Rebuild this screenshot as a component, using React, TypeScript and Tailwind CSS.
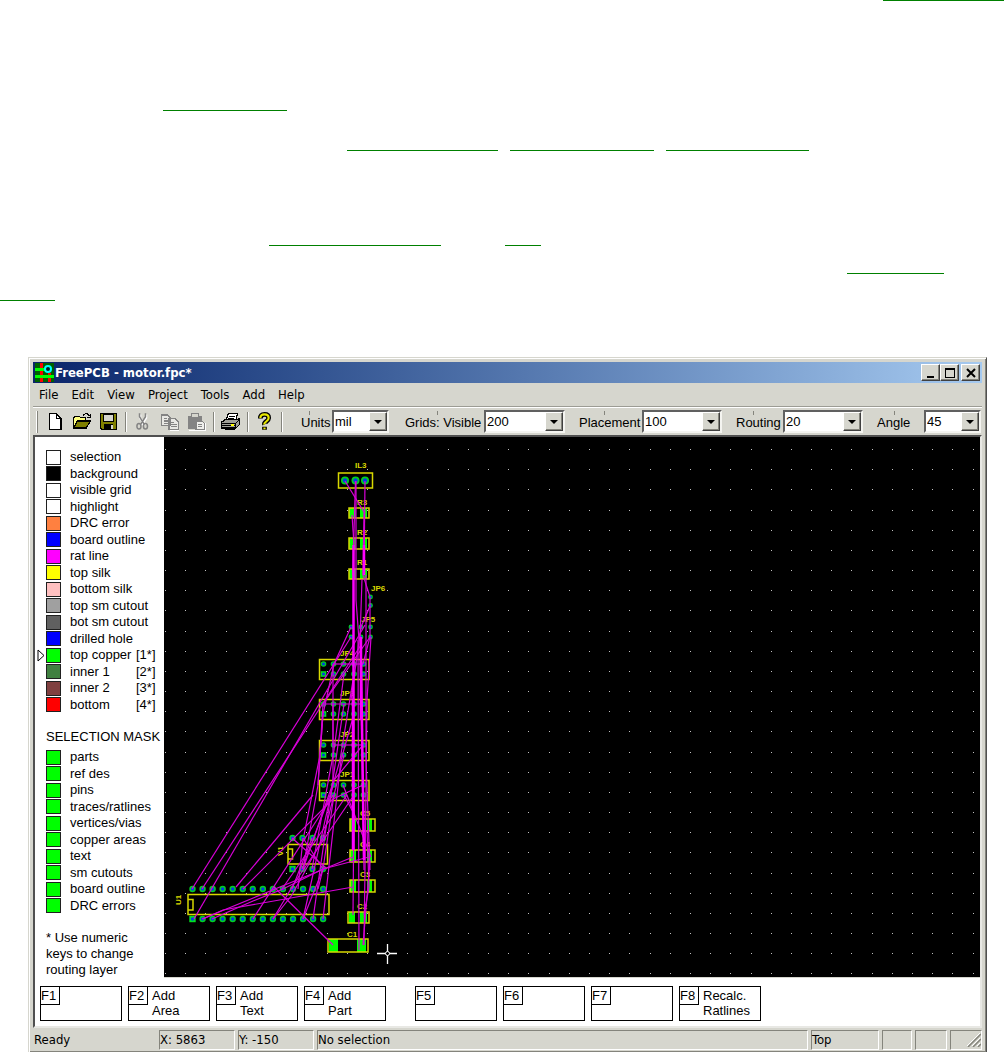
import type { ReactNode } from 'react'

const layers = [
  { name: 'selection', color: 'bg-white' },
  { name: 'background', color: 'bg-black' },
  { name: 'visible grid', color: 'bg-white' },
  { name: 'highlight', color: 'bg-white' },
  { name: 'DRC error', color: 'bg-[#ff8040]' },
  { name: 'board outline', color: 'bg-[#0000ff]' },
  { name: 'rat line', color: 'bg-[#ff00ff]' },
  { name: 'top silk', color: 'bg-[#ffff00]' },
  { name: 'bottom silk', color: 'bg-[#ffc0c0]' },
  { name: 'top sm cutout', color: 'bg-[#a0a0a0]' },
  { name: 'bot sm cutout', color: 'bg-[#606060]' },
  { name: 'drilled hole', color: 'bg-[#0000ff]' },
  { name: 'top copper', color: 'bg-[#00ff00]', tag: '[1*]', active: true },
  { name: 'inner 1', color: 'bg-[#408040]', tag: '[2*]' },
  { name: 'inner 2', color: 'bg-[#804040]', tag: '[3*]' },
  { name: 'bottom', color: 'bg-[#ff0000]', tag: '[4*]' },
]

const masks = [
  'parts',
  'ref des',
  'pins',
  'traces/ratlines',
  'vertices/vias',
  'copper areas',
  'text',
  'sm cutouts',
  'board outline',
  'DRC errors',
]

const menus = ['File', 'Edit', 'View', 'Project', 'Tools', 'Add', 'Help']

const combos = [
  { label: 'Units', value: 'mil', labelClass: 'w-[47px] pl-4', boxClass: 'w-[57px]' },
  { label: 'Grids: Visible', value: '200', labelClass: 'w-[95px] pl-4', boxClass: 'w-[81px]' },
  { label: 'Placement', value: '100', labelClass: 'w-[77px] pl-[14px]', boxClass: 'w-[80px]' },
  { label: 'Routing', value: '20', labelClass: 'w-[61px] pl-[14px]', boxClass: 'w-[80px]' },
  { label: 'Angle', value: '45', labelClass: 'w-[61px] pl-[14px]', boxClass: 'w-[57px]' },
]

const functionKeys = [
  [
    { id: 'F1', lines: [] },
    { id: 'F2', lines: ['Add', 'Area'] },
    { id: 'F3', lines: ['Add', 'Text'] },
    { id: 'F4', lines: ['Add', 'Part'] },
  ],
  [
    { id: 'F5', lines: [] },
    { id: 'F6', lines: [] },
    { id: 'F7', lines: [] },
    { id: 'F8', lines: ['Recalc.', 'Ratlines'] },
  ],
]

// Two-pad parts: outline plus left and right copper pads
const chips = [
  { ref: 'R3', x: 349, y: 508, w: 20, h: 10, pads: [[349, 7], [360, 7]], tx: 357, ty: 505 },
  { ref: 'R2', x: 349, y: 538, w: 20, h: 11, pads: [[349, 7], [360, 7]], tx: 357, ty: 535 },
  { ref: 'R1', x: 349, y: 569, w: 20, h: 10, pads: [[349, 7], [360, 7]], tx: 357, ty: 565 },
  { ref: 'C5', x: 350, y: 819, w: 25, h: 12, pads: [[350, 6], [367, 5]], tx: 360, ty: 816 },
  { ref: 'C4', x: 350, y: 850, w: 25, h: 12, pads: [[350, 6], [367, 5]], tx: 360, ty: 847 },
  { ref: 'C3', x: 350, y: 880, w: 25, h: 12, pads: [[350, 6], [367, 5]], tx: 360, ty: 877 },
  { ref: 'C2', x: 348, y: 912, w: 21, h: 11, pads: [[349, 6], [360, 7]], tx: 357, ty: 909 },
  { ref: 'C1', x: 328, y: 939, w: 40, h: 13, pads: [[329, 9], [357, 9]], tx: 347, ty: 937 },
]

const headers = [
  { ref: 'JP4', y: 659 },
  { ref: 'JP3', y: 699 },
  { ref: 'JP2', y: 740 },
  { ref: 'JP1', y: 780 },
]
const headerPins = [323.5, 333.5, 343.5, 354, 363.5]

const vias = [
  [370.5, 597], [370.5, 605.5],
  [351, 627], [361, 627], [370.5, 627],
  [351, 637], [361, 637], [370.5, 637],
]

const dipPins = Array.from({ length: 14 }, (_, i) => 192.5 + i * 10.05)

const ratlines = [
  'M345 481L364 512', 'M355.5 481L354 530L353 575', 'M365 481L364 575',
  'M352 515L354 545', 'M356 481L356 600L359 640', 'M364 512L363 575L370 597',
  'M370 597L370 637L363 664', 'M370 606L361 627L351 700',
  'M351 637L192 889', 'M361 645L202 889', 'M365 625L194 919',
  'M370 637L344 674L323 704L318 785', 'M333 664L333 745',
  'M351 627L334 664L323 714L320 755L304 835', 'M333 664H363', 'M323 704H363',
  'M333 745H363', 'M362 579L360 640L364 870', 'M366 575V760L370 870',
  'M358 640L359 950', 'M371 637L367 700L366 790L364 945', 'M323 714L318 785L303 869',
  'M333 704L333 785L303 919', 'M344 674L334 750L312 869', 'M354 674L340 760L330 795L302 869',
  'M344 704L330 800L313 919', 'M354 714L341 760L323 919', 'M344 755L334 795L323 838',
  'M334 795L323 869L318 889', 'M363 785L333 799L243 889', 'M313 795L236 887',
  'M354 795L295 882L273 919', 'M333 795L253 919',
  'M343 785L371 857', 'M363 745L334 780L303 869', 'M344 795L354 814',
  'M292 838L327 869', 'M303 838L323 869', 'M323 838L292 895L273 919',
  'M312 838L292 889', 'M353 857L319 871L202 919', 'M369 857L323 869L283 889L253 901L212 919',
  'M353 887L223 910L203 919', 'M333 945L274 887', 'M354 797L353 915',
  'M367 830L369 887L364 915', 'M370 860L363 945', 'M347 795L282 889',
  'M303 838L298 889', 'M323 869L303 919',
]

const boldRatlines = [
  'M353.5 545V850', 'M361 637V720', 'M353 700V850', 'M364 545V575', 'M361 660L364 860',
]

// Visible grid, wide enough for large windows
const gridDots = Array.from({ length: 27 }, (_, row) =>
  Array.from(
    { length: 120 },
    (_, col) => `M${Math.round(1 + col * 20.19)} ${Math.round(12 + row * 20.17)}h1v1h-1z`,
  ).join(''),
).join('')

function ToolIcon({ children }: { children: ReactNode }) {
  return (
    <svg viewBox="0 0 16 16" className="size-[19px]" shapeRendering="crispEdges">
      {children}
    </svg>
  )
}

const tools = [
  [
    {
      name: 'New',
      icon: (
        <ToolIcon>
          <path d="M3 1h7l4 4v10H3z" />
          <path d="M4 2h5v4h4v8H4zM10 3l2 2h-2z" fill="#fff" />
        </ToolIcon>
      ),
    },
    {
      name: 'Open',
      icon: (
        <ToolIcon>
          <path d="M1 13V4.500h1l1-1h3l1 1h4.500V7" fill="#ffff80" stroke="#000" />
          <path d="M1.500 13.500l3-6h11l-3.500 6z" fill="#808000" stroke="#000" />
          <path d="M9 2.500h1l1-1h2l2 2M15.500 1.500v3h-3" fill="none" stroke="#000" />
        </ToolIcon>
      ),
    },
    {
      name: 'Save',
      icon: (
        <ToolIcon>
          <path d="M1.500 1.500h13v13h-12l-1-1z" fill="#808000" stroke="#000" />
          <path d="M4 2h8v6H4z" fill="#d6d6ce" stroke="#000" />
          <path d="M4 10h8v4H4z" fill="#000" />
          <path d="M10 11h1.500v3H10z" fill="#d6d6ce" />
        </ToolIcon>
      ),
    },
  ],
  [
    {
      name: 'Cut',
      icon: (
        <ToolIcon>
          <g fill="none" shapeRendering="auto">
            <path d="M6 2v3l4 6M11 2v3l-4 6" stroke="#fff" strokeWidth="2" />
            <path d="M5.500 1v3l4 6.500M10.500 1v3l-4 6.500" stroke="#848484" strokeWidth="1.300" />
            <ellipse cx="5" cy="12" rx="1.700" ry="2.300" stroke="#848484" strokeWidth="1.300" />
            <ellipse cx="10.500" cy="12" rx="1.700" ry="2.300" stroke="#848484" strokeWidth="1.300" />
          </g>
        </ToolIcon>
      ),
    },
    {
      name: 'Copy',
      icon: (
        <ToolIcon>
          <path d="M1.500 2.500h5l2 2v7h-7zM7.500 5.500h5l3 3v6h-8z" fill="#e8e8e4" stroke="#848484" />
          <path d="M3 5.500h3M3 7.500h4M3 9.500h4M9 8.500h3M9 10.500h5M9 12.500h5" stroke="#848484" />
          <path d="M8 15.500h8.500" stroke="#fff" />
        </ToolIcon>
      ),
    },
    {
      name: 'Paste',
      icon: (
        <ToolIcon>
          <path d="M1.500 3.500h11v10h-11z" fill="#848484" stroke="#848484" />
          <path d="M4 1.500h6v3H4z" fill="#d6d6ce" stroke="#848484" />
          <path d="M7.500 7.500h5l2 2v5h-7z" fill="#efefec" stroke="#848484" />
          <path d="M9 10.500h4M9 12.500h4" stroke="#848484" />
          <path d="M2 15.500h13.500V9" fill="none" stroke="#fff" />
        </ToolIcon>
      ),
    },
  ],
  [
    {
      name: 'Print',
      icon: (
        <ToolIcon>
          <path d="M4.500 6.500l1.500-5h8l-1.500 5z" fill="#fff" stroke="#000" />
          <path d="M6.500 3.500h5M6 5.500h5" stroke="#000" />
          <path d="M.5 8.500l3-2h10l2-1v5l-3 3h-12z" fill="#a0a098" stroke="#000" />
          <path d="M1 9.500h11.500v4M1 11.500h11M12.500 9.500l3-3" fill="none" stroke="#000" />
          <path d="M8 11h3" stroke="#ffff00" />
          <path d="M3 14.500h9" stroke="#000" />
        </ToolIcon>
      ),
    },
  ],
  [
    {
      name: 'About',
      icon: (
        <ToolIcon>
          <g fill="none" shapeRendering="auto">
            <path d="M4.500 5.500q0-3.500 3.500-3.500t3.500 3q0 1.500-2 3t-1.500 2.500M8 12.500v2.500" stroke="#000" strokeWidth="4" />
            <path d="M4.500 5q0-3 3.500-3t3.500 3q0 1.500-2 3t-1.500 2.500M8 13v1.500" stroke="#e8e800" strokeWidth="1.800" />
          </g>
        </ToolIcon>
      ),
    },
  ],
]

const raised =
  'border border-t-white border-l-white border-r-[#404040] border-b-[#404040] bg-[#d6d6ce] shadow-[inset_-1px_-1px_0_#84847c]'

function Link({ className, label }: { className: string; label: string }) {
  return <a href="#top" aria-label={label} className={`h-px shrink-0 bg-[#008000] ${className}`} />
}

function PageLinks() {
  return (
    <header className="h-[357px] overflow-hidden">
      <div className="flex h-[110px] items-start justify-end">
        <Link className="w-[121px]" label="Reference" />
      </div>
      <div className="flex h-10 items-start pl-[163px]">
        <Link className="w-[124px]" label="Section" />
      </div>
      <div className="flex h-[95px] items-start gap-3 pl-[347px]">
        <Link className="w-[151px]" label="First topic" />
        <Link className="w-36" label="Second topic" />
        <Link className="w-[143px]" label="Third topic" />
      </div>
      <div className="flex h-7 items-start gap-16 pl-[269px]">
        <Link className="w-[172px]" label="Guide" />
        <Link className="w-9" label="Note" />
      </div>
      <div className="flex h-[27px] items-start justify-end pr-[60px]">
        <Link className="w-[97px]" label="Further reading" />
      </div>
      <div className="flex items-start">
        <Link className="w-[55px]" label="Further reading, continued" />
      </div>
    </header>
  )
}

function TitleBar() {
  const button = `flex h-[17px] w-[19px] items-center justify-center ${raised}`

  return (
    <div className="flex h-[21px] items-center bg-linear-to-r from-[#0a246a] to-[#a6caf0] pr-[2px] pl-[2px] text-white">
      <svg viewBox="0 0 19 19" className="mr-px size-[19px]">
        <path d="M0 0h19v19H0z" fill="#006000" />
        <path d="M5 0h3v19H5zM13 10h3v9h-3z" fill="#ff0000" />
        <path d="M0 5h11v3H0zM0 12h19v3H0z" fill="#00ff00" />
        <circle cx="13" cy="6" r="3" fill="#002020" stroke="#00ffff" strokeWidth="2" />
      </svg>
      <h1 className="flex-1 font-bold">FreePCB - motor.fpc*</h1>
      <button aria-label="Minimize" className={button}>
        <svg viewBox="0 0 12 12" className="size-3">
          <path d="M2 9h7v2H2z" />
        </svg>
      </button>
      <button aria-label="Maximize" className={button}>
        <svg viewBox="0 0 12 12" className="size-3">
          <path d="M1 1h10v10H1zM2 3v7h8V3z" fillRule="evenodd" />
        </svg>
      </button>
      <button aria-label="Close" className={`ml-[2px] ${button}`}>
        <svg viewBox="0 0 12 12" className="size-3">
          <path d="M2 2l8 8M10 2l-8 8" stroke="#000" strokeWidth="2" />
        </svg>
      </button>
    </div>
  )
}

function Divider() {
  return (
    <span className="flex w-[7px] justify-center">
      <span className="h-5 w-[2px] border-l border-[#84847c] border-r border-r-white" />
    </span>
  )
}

function Toolbar() {
  return (
    <div className="flex h-7 items-center border-t border-white">
      <span className="mr-[3px] ml-[3px] h-[22px] w-[2px] border-r border-[#84847c] bg-white" />
      {tools.map((group) => (
        <div key={group[0].name} className="flex items-center">
          {group.map((tool) => (
            <button
              key={tool.name}
              aria-label={tool.name}
              className="flex h-6 w-[27px] items-center justify-center"
            >
              {tool.icon}
            </button>
          ))}
          <Divider />
        </div>
      ))}
      {combos.map((combo) => (
        <div key={combo.label} className="flex h-[23px] items-center font-[Liberation_Sans,sans-serif]">
          <label
            htmlFor={combo.label}
            className={`relative flex h-full items-center whitespace-nowrap pt-[2px] ${combo.labelClass}`}
          >
            <span className="absolute top-px left-1/2 h-1 w-px bg-[#84847c]" />
            {combo.label}
          </label>
          <div
            className={`relative h-[23px] border-2 border-t-[#606060] border-l-[#606060] border-r-[#f4f4f0] border-b-[#f4f4f0] bg-white ${combo.boxClass}`}
          >
            <select
              id={combo.label}
              defaultValue={combo.value}
              className="block h-full w-full appearance-none pl-px leading-4 outline-none"
            >
              <option>{combo.value}</option>
            </select>
            <span
              className={`pointer-events-none absolute inset-y-0 right-0 flex w-[18px] items-center justify-center ${raised}`}
            >
              <svg viewBox="0 0 8 4" className="h-1 w-2">
                <path d="M0 0h8L4 4z" />
              </svg>
            </span>
          </div>
        </div>
      ))}
    </div>
  )
}

function LayerPanel() {
  return (
    <aside className="w-[129px] shrink-0 bg-white pt-3 font-[Liberation_Sans,sans-serif] leading-4">
      <ul className="grid h-[264px] auto-rows-fr">
        {layers.map((layer) => (
          <li key={layer.name} className="grid grid-cols-[11px_24px_66px_1fr] items-center">
            <span className="pl-[2px]">
              {layer.active && (
                <svg viewBox="0 0 8 13" className="h-[13px] w-2">
                  <path d="M1 1l6 5.500L1 12z" fill="#fff" stroke="#000" />
                </svg>
              )}
            </span>
            <button
              aria-label={`${layer.name} color`}
              className={`size-[15px] border border-[#202020] ${layer.color}`}
            />
            <span className="whitespace-nowrap">{layer.name}</span>
            <span>{layer.tag}</span>
          </li>
        ))}
      </ul>
      <h2 className="mt-4 h-4 pl-[11px] whitespace-nowrap">SELECTION MASK</h2>
      <div className="mt-1 grid h-[165px] auto-rows-fr">
        {masks.map((mask) => (
          <label key={mask} className="grid grid-cols-[24px_1fr] items-center pl-[11px] whitespace-nowrap">
            <input
              type="checkbox"
              defaultChecked
              className="size-[15px] appearance-none border border-[#202020] bg-[#ff0000] checked:bg-[#00ff00]"
            />
            {mask}
          </label>
        ))}
      </div>
      <p className="mt-4 pl-[11px] whitespace-nowrap">
        * Use numeric
        <br />
        keys to change
        <br />
        routing layer
      </p>
    </aside>
  )
}

function Pad({ x, y, square = false, r = 3 }: { x: number; y: number; square?: boolean; r?: number }) {
  return (
    <g>
      {square ? (
        <rect x={x - r} y={y - r} width={r * 2} height={r * 2} fill="#00e020" />
      ) : (
        <circle cx={x} cy={y} r={r} fill="#00d020" />
      )}
      <circle cx={x} cy={y} r={r * 0.55} fill="#0040e0" />
    </g>
  )
}

function Board() {
  return (
    <svg
      className="h-[540px] min-w-0 flex-1 bg-black font-[Liberation_Sans,sans-serif] text-[8px] font-bold"
      role="img"
      aria-label="Board layout"
    >
      <path d={gridDots} fill="#c0c0c0" />
      <g transform="translate(-164 -437)">
        <g fill="#00ff00">
          {chips.map((chip) =>
            chip.pads.map(([x, w]) => (
              <rect key={`${chip.ref}-${x}`} x={x} y={chip.y} width={w} height={chip.h} />
            )),
          )}
        </g>
        {[345, 355.5, 365].map((x) => (
          <Pad key={x} x={x} y={480.5} r={4} />
        ))}
        {vias.map(([x, y]) => (
          <Pad key={`${x}-${y}`} x={x} y={y} r={2.4} />
        ))}
        {headers.map((header) =>
          headerPins.map((x, i) => (
            <g key={`${header.ref}-${x}`}>
              <Pad x={x} y={header.y + 5} r={2.8} />
              <Pad x={x} y={header.y + 15} r={2.8} square={i === 0} />
            </g>
          )),
        )}
        {[292.5, 302.5, 312.5, 323].map((x, i) => (
          <g key={x}>
            <Pad x={x} y={838} r={3.2} />
            <Pad x={x} y={869} r={3.2} square={i === 0} />
          </g>
        ))}
        {dipPins.map((x, i) => (
          <g key={x}>
            <Pad x={x} y={889} r={3.2} />
            <Pad x={x} y={919} r={3.2} square={i === 0} />
          </g>
        ))}

        <g fill="none" stroke="#d8d800" strokeWidth="1.500">
          <rect x="338.500" y="473" width="34" height="15" />
          {chips.map((chip) => (
            <rect key={chip.ref} x={chip.x} y={chip.y} width={chip.w} height={chip.h} />
          ))}
          {headers.map((header) => (
            <rect key={header.ref} x="319.500" y={header.y + 0.5} width="49.500" height="20" />
          ))}
          <path d="M288 844.500h39.500v19.500h-39.500zM288 849h4.500v10h-4.500" />
          <path d="M188 894.500h141v20h-141zM188 899.500h5v10.500h-5" />
        </g>

        <g fill="#d8d800" textAnchor="start">
          <text x="355" y="468">IL3</text>
          <text x="371" y="591">JP6</text>
          <text x="361" y="622">JP5</text>
          {headers.map((header) => (
            <text key={header.ref} x="340" y={header.y - 3}>{header.ref}</text>
          ))}
          {chips.map((chip) => (
            <text key={chip.ref} x={chip.tx} y={chip.ty}>{chip.ref}</text>
          ))}
          <text transform="translate(283 856) rotate(-90)">V1</text>
          <text transform="translate(181 905) rotate(-90)">U1</text>
        </g>

        <g fill="none" stroke="#d800d8" strokeWidth="1.200">
          {ratlines.map((d) => (
            <path key={d} d={d} />
          ))}
        </g>
        <g fill="none" stroke="#ff00ff" strokeWidth="2.500">
          {boldRatlines.map((d) => (
            <path key={d} d={d} />
          ))}
        </g>

        <path d="M377 953.500h20M387.500 944v20" stroke="#fff" strokeWidth="1.300" />
        <circle cx="387.500" cy="953.500" r="2" fill="#000" stroke="#fff" />
      </g>
    </svg>
  )
}

function FunctionKeys() {
  return (
    <div className="flex h-12 gap-[29px] bg-white pt-2 pl-[5px] font-[Liberation_Sans,sans-serif] leading-[15px]">
      {functionKeys.map((group) => (
        <div key={group[0].id} className="flex gap-[6px]">
          {group.map((key) => (
            <button key={key.id} className="flex h-[35px] w-[82px] items-start border border-black text-left">
              <span className="h-[18px] w-[19px] border-r border-b border-black pt-px">{key.id}</span>
              <span className="pt-px pl-1">
                {key.lines.map((line) => (
                  <span key={line} className="block">{line}</span>
                ))}
              </span>
            </button>
          ))}
        </div>
      ))}
    </div>
  )
}

function StatusBar() {
  const pane =
    'flex h-5 items-center border border-t-[#84847c] border-l-[#84847c] border-r-white border-b-white whitespace-nowrap'

  return (
    <footer className="flex h-6 items-center gap-[3px]">
      <span className="w-[123px] pl-px">Ready</span>
      <span className={`w-[76px] ${pane}`}>X: 5863</span>
      <span className={`w-[76px] ${pane}`}>Y: -150</span>
      <span className={`flex-1 ${pane}`}>No selection</span>
      <span className={`w-[68px] ${pane}`}>Top</span>
      <span className={`w-[30px] ${pane}`} />
      <span className={`w-8 ${pane}`} />
      <span className={`w-8 justify-end ${pane}`}>
        <svg viewBox="0 0 14 14" className="size-[14px]">
          <path d="M1 14L14 1M6 14l8-8M11 14l3-3" stroke="#84847c" strokeWidth="1.500" />
          <path d="M0 13L13 0M5 13l8-8M10 13l3-3" stroke="#fff" />
        </svg>
      </span>
    </footer>
  )
}

export default function App() {
  return (
    <div id="top" className="bg-white text-black">
      <PageLinks />
      <main className="mr-[17px] ml-7 border border-t-[#d6d6ce] border-l-[#d6d6ce] border-r-[#505050] border-b-[#505050] bg-[#d6d6ce] px-1 pt-1 font-[DejaVu_Sans_Condensed,DejaVu_Sans,sans-serif] text-[13px] leading-4 shadow-[inset_1px_1px_0_#fff,inset_-1px_-1px_0_#84847c]">
        <TitleBar />
        <nav className="flex h-6 items-center gap-[13px] border-b border-[#9c9c94] pl-[6px]">
          {menus.map((menu) => (
            <button key={menu}>{menu}</button>
          ))}
        </nav>
        <Toolbar />
        <div className="border-2 border-t-[#505050] border-l-[#505050] border-r-[#e8e8e4] border-b-[#e8e8e4]">
          <div className="flex">
            <LayerPanel />
            <Board />
          </div>
          <FunctionKeys />
        </div>
        <StatusBar />
      </main>
    </div>
  )
}
